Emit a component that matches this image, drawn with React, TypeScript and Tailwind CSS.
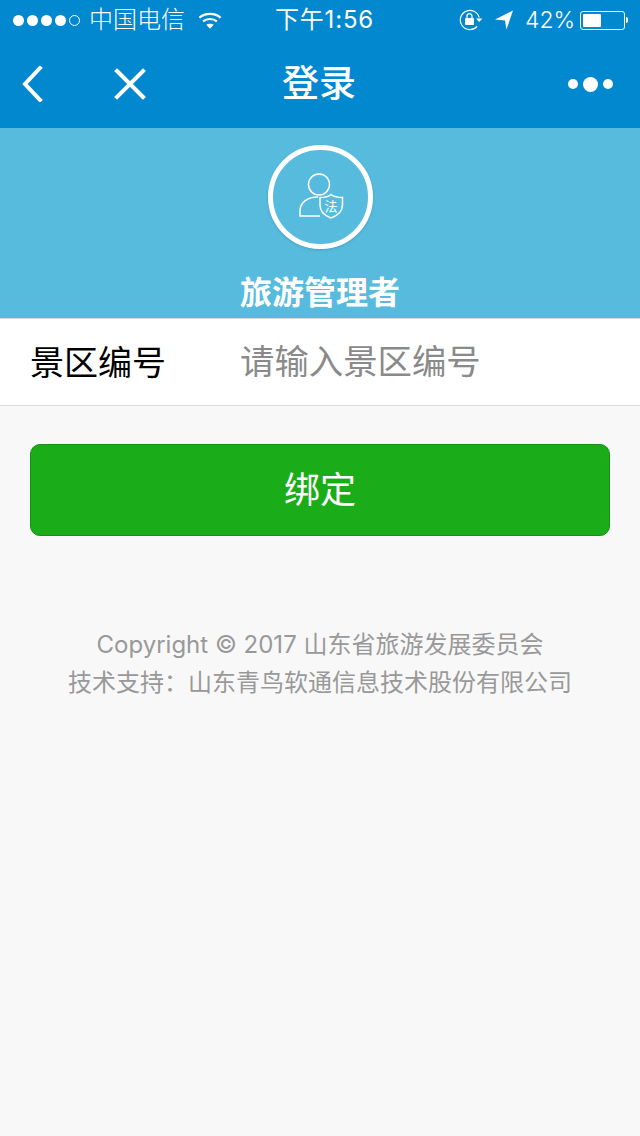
import React from "react";

const font = { fontFamily: 'Inter, "Noto Sans CJK SC", sans-serif' };

function Dots() {
  return (
    <div className="flex items-center gap-[3px] w-[67px]">
      <span className="w-[11px] h-[11px] rounded-full bg-white" />
      <span className="w-[11px] h-[11px] rounded-full bg-white" />
      <span className="w-[11px] h-[11px] rounded-full bg-white" />
      <span className="w-[11px] h-[11px] rounded-full bg-white" />
      <span className="w-[11px] h-[11px] rounded-full border border-white" />
    </div>
  );
}

function Wifi() {
  return (
    <svg width="24" height="19" viewBox="0 0 26 20" fill="none" stroke="white" strokeWidth="2.4">
      <path d="M1.5 7 C7.5 1.5 18.5 1.5 24.5 7" />
      <path d="M5.5 11 C9.5 7.5 16.5 7.5 20.5 11" />
      <path d="M9 14.6 C11 13 15 13 17 14.6 L13 19 Z" fill="white" stroke="none" />
    </svg>
  );
}

function RotationLock() {
  return (
    <svg width="24" height="22" viewBox="0 0 24 22" fill="none">
      <path d="M20.2 8.5 A9.6 9.6 0 1 0 18 17.5" stroke="white" strokeWidth="1.2" />
      <path d="M17 9.5 L23.5 9.5 L20.2 13 Z" fill="white" />
      <rect x="6" y="9" width="9" height="7" rx="1" fill="white" />
      <path d="M8 9 V7.2 A2.5 2.5 0 0 1 13 7.2 V9" stroke="white" strokeWidth="1.3" />
    </svg>
  );
}

function Location() {
  return (
    <svg width="18" height="20" viewBox="0 0 18 20">
      <path d="M0 9.5 L18 0.5 L11.5 19.5 L10 10.5 Z" fill="white" />
    </svg>
  );
}

function Battery() {
  return (
    <div className="flex items-center w-[48px]">
      <div className="w-[45px] h-[19px] rounded-[3px] border border-white p-[2px]">
        <div className="w-[18px] h-full bg-white rounded-[1px]" />
      </div>
      <div className="ml-[1px] w-[2px] h-[6px] bg-white rounded-r-[2px]" />
    </div>
  );
}

function Avatar() {
  return (
    <div className="w-[105px] h-[104px] rounded-full border-[5px] border-white flex items-center justify-center shadow-[0_1px_3px_rgba(0,0,0,0.15)]">
      <svg width="46" height="48" viewBox="0 0 46 48" fill="none" stroke="white" strokeWidth="1.5" className="ml-[2px] mt-[-3px]">
        <circle cx="21" cy="12.5" r="10.5" />
        <path d="M22 44 H2 V39 C2 30 10 25 20 25" />
        <path d="M33 22.5 C36 25 40 25.5 44.5 25.5 V33 C44.5 39 40 43.5 33 46 C26 43.5 22 39 22 33 V25.5 C26 25.5 30 25 33 22.5 Z" fill="#57bbde" />
        <text x="33" y="39" fontSize="13" textAnchor="middle" fill="white" stroke="none" fontWeight="400" style={font}>法</text>
      </svg>
    </div>
  );
}

export default function App() {
  return (
    <div className="w-[640px] h-[1136px] bg-[#f8f8f8] flex flex-col overflow-hidden" style={font}>
      <div className="bg-[#0288cf] text-white">
        <div className="h-[40px] flex items-center pl-[13px] text-[24px] leading-[40px]">
          <div className="flex items-center w-[262px]">
            <Dots />
            <span className="ml-[9px] font-light">中国电信</span>
            <span className="ml-[13px] flex"><Wifi /></span>
          </div>
          <span className="w-[184px] whitespace-nowrap tracking-[0.8px]">下午1:56</span>
          <div className="flex items-center flex-1">
            <RotationLock />
            <span className="ml-[12px] flex"><Location /></span>
            <span className="ml-[12px] w-[55px] font-light whitespace-nowrap text-[23px]">42%</span>
            <Battery />
          </div>
        </div>
        <div className="h-[88px] flex items-center justify-between relative pl-[22px] pr-[27px]">
          <div className="flex items-center gap-[71px]">
            <svg width="21" height="36" viewBox="0 0 21 36" fill="none" stroke="white" strokeWidth="4" strokeLinecap="square">
              <path d="M18 2 L3 18 L18 34" />
            </svg>
            <svg width="32" height="32" viewBox="0 0 32 32" fill="none" stroke="white" strokeWidth="4" strokeLinecap="square">
              <path d="M3 3 L29 29 M29 3 L3 29" />
            </svg>
          </div>
          <span className="absolute left-0 right-[2px] text-center text-[37px] leading-[44px] font-medium">登录</span>
          <div className="flex items-center gap-[5px]">
            <span className="w-[10px] h-[10px] rounded-full bg-white" />
            <span className="w-[15px] h-[15px] rounded-full bg-white" />
            <span className="w-[10px] h-[10px] rounded-full bg-white" />
          </div>
        </div>
      </div>

      <div className="h-[190px] bg-[#57bbde] flex flex-col items-center pt-[17px]">
        <Avatar />
        <span className="mt-[24px] text-[32px] leading-[40px] font-bold text-white">旅游管理者</span>
      </div>

      <div className="h-[88px] bg-white border-y border-[#d9d9d9] flex items-center pl-[30px] text-[34px]">
        <span className="w-[210px] text-black">景区编号</span>
        <span className="text-[34.4px] text-[#8a8a8a]">请输入景区编号</span>
      </div>

      <div className="mt-[38px] mx-[30px] h-[92px] bg-[#1aad19] border border-[#158f14] rounded-[10px] flex items-center justify-center pb-[1px] text-white text-[36px]">
        绑定
      </div>

      <div className="mt-[90px] text-center text-[24px] leading-[38px] text-[#999999]">
        <p>Copyright © 2017 山东省旅游发展委员会</p>
        <p>技术支持：山东青鸟软通信息技术股份有限公司</p>
      </div>
    </div>
  );
}
